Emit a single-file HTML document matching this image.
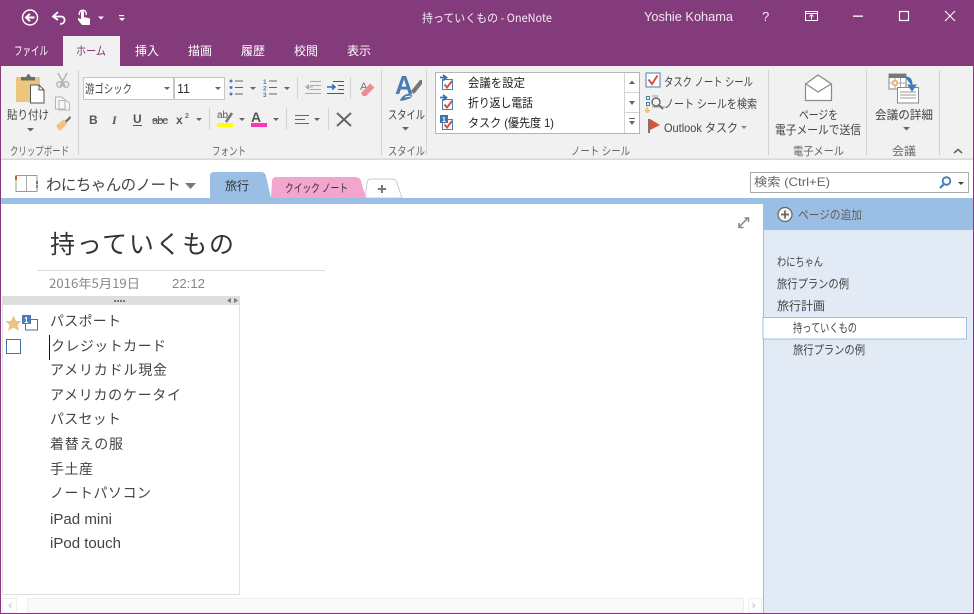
<!DOCTYPE html>
<html lang="ja"><head><meta charset="utf-8"><title>持っていくもの - OneNote</title>
<style>
html,body{margin:0;padding:0;width:974px;height:614px;overflow:hidden;background:#fff}
svg{display:block;position:absolute;left:0;top:0}
text{font-family:"Liberation Sans","Noto Sans CJK JP",sans-serif;white-space:pre}
.j{font-family:"Noto Sans CJK JP","Liberation Sans",sans-serif}
.r{font-size:12px;fill:#444}
.g{font-size:11.5px;fill:#666}
.m{font-size:12px;fill:#fff}
.n{font-size:14px;fill:#444}
.p{font-size:12px;fill:#444}
</style></head><body>
<svg width="974" height="614" viewBox="0 0 974 614">
<rect width="974" height="614" fill="#fff"/>
<rect width="974" height="66" fill="#843b7c"/>
<rect x="63" y="36" width="57" height="30" fill="#f1f1f1"/>
<rect y="66" width="974" height="93" fill="#f1f1f1"/>
<rect y="158.500" width="974" height="1.500" fill="#d8d8d8"/>
<!-- QAT -->
<circle cx="30" cy="17.500" r="7.500" fill="none" stroke="#fff" stroke-width="1.400"/>
<path d="M34.500 17.500H26.500M30 13.800L26 17.500L30 21.200" fill="none" stroke="#fff" stroke-width="2"/>
<path d="M58 12L53 16.500L58 20M54 16.500H61C66 16.500 66 24 60 24" fill="none" stroke="#fff" stroke-width="1.800"/>
<path d="M82 25L78 20V18L81 19V12.500A1.500 1.500 0 0 1 84 12.500V17L90 18.500V25Z" fill="#fff"/><path d="M79.500 15A3.500 3.500 0 1 1 86 15" fill="none" stroke="#fff" stroke-width="1.300"/>
<path d="M98 16.500H104L101 19.500Z" fill="#fff"/>
<rect x="119" y="15" width="5" height="1.200" fill="#fff"/><path d="M119 18H125L122 21Z" fill="#fff"/>
<text x="422" y="22" class="j" style="font-size:11.500px;fill:#f4ecf3" textLength="130" lengthAdjust="spacingAndGlyphs">持っていくもの - OneNote</text>
<text x="644" y="21" style="font-size:12.500px;fill:#f0e6ef" textLength="89" lengthAdjust="spacingAndGlyphs">Yoshie Kohama</text>
<text x="762" y="21" style="font-size:13px;fill:#f0e6ef">?</text>
<rect x="805.500" y="11.500" width="12" height="9" fill="none" stroke="#fff"/><path d="M806 13.500H817M811.500 19.500V15M809.500 16.500L811.500 14.800L813.500 16.500" fill="none" stroke="#fff" stroke-width="1"/>
<rect x="853" y="15.500" width="10" height="1.300" fill="#fff"/>
<rect x="899.500" y="11.500" width="9" height="9" fill="none" stroke="#fff" stroke-width="1.200"/>
<path d="M945 11L955 21M955 11L945 21" stroke="#fff" stroke-width="1.100"/>
<!-- menu -->
<g class="j">
<text x="14" y="55" class="m" textLength="34" lengthAdjust="spacingAndGlyphs">ファイル</text>
<text x="76" y="55" class="m" style="fill:#80397b" textLength="30" lengthAdjust="spacingAndGlyphs">ホーム</text>
<text x="135" y="55" class="m" textLength="24">挿入</text>
<text x="188" y="55" class="m" textLength="24">描画</text>
<text x="241" y="55" class="m" textLength="24">履歴</text>
<text x="294" y="55" class="m" textLength="24">校閲</text>
<text x="347" y="55" class="m" textLength="24">表示</text>
</g>
<!-- separators -->
<g fill="#d2d2d2">
<rect x="78" y="70" width="1" height="85"/><rect x="381" y="70" width="1" height="85"/><rect x="426" y="70" width="1" height="85"/><rect x="768" y="70" width="1" height="85"/><rect x="866" y="70" width="1" height="85"/><rect x="939" y="70" width="1" height="85"/>
<rect x="297" y="77" width="1" height="22"/><rect x="350" y="77" width="1" height="22"/><rect x="209" y="108" width="1" height="22"/><rect x="286" y="108" width="1" height="22"/><rect x="328" y="108" width="1" height="22"/>
</g>
<!-- paste -->
<rect x="16" y="77" width="24" height="25" rx="1" fill="#eec57d"/>
<path d="M21 77H26L28 74H29L31 77H35V80.500H21Z" fill="#6d6d6d"/>
<path d="M30.500 85H39L44 90V103H30.500Z" fill="#fff" stroke="#555"/>
<path d="M39 85V90H44" fill="none" stroke="#555"/>
<path d="M58 73L65 86M67 73L60 86" stroke="#b4b4b4" stroke-width="1.500"/><circle cx="59.500" cy="84.500" r="2.800" fill="none" stroke="#b4b4b4" stroke-width="1.300"/><circle cx="66" cy="84.500" r="2.800" fill="none" stroke="#b4b4b4" stroke-width="1.300"/>
<path d="M55.500 97H62L65 100V109H55.500ZM59 100.500H66L69.500 103V110H59Z" fill="#f7f7f7" stroke="#b4b4b4"/>
<path d="M65 121L70 116L71 118L66 123Z" fill="#666"/><path d="M56 126L64 119L67 124L60 131Z" fill="#eec57d"/>
<g class="j">
<text x="7" y="119" class="r" textLength="42" lengthAdjust="spacingAndGlyphs">貼り付け</text>
<text x="10" y="155" class="g" textLength="59" lengthAdjust="spacingAndGlyphs">クリップボード</text>
<text x="212" y="155" class="g" textLength="34" lengthAdjust="spacingAndGlyphs">フォント</text>
<text x="388" y="155" class="g" textLength="37" lengthAdjust="spacingAndGlyphs">スタイル</text>
<text x="571" y="155" class="g" textLength="59" lengthAdjust="spacingAndGlyphs">ノート シール</text>
<text x="793" y="155" class="g" textLength="51" lengthAdjust="spacingAndGlyphs">電子メール</text>
<text x="892" y="155" class="g" textLength="24" lengthAdjust="spacingAndGlyphs">会議</text>
<text x="388" y="119" class="r" textLength="37" lengthAdjust="spacingAndGlyphs">スタイル</text>
<text x="799" y="119" class="r" textLength="39" lengthAdjust="spacingAndGlyphs">ページを</text>
<text x="775" y="134" class="r" textLength="86" lengthAdjust="spacingAndGlyphs">電子メールで送信</text>
<text x="875" y="119" class="r" textLength="58" lengthAdjust="spacingAndGlyphs">会議の詳細</text>
</g>
<g fill="#666"><path d="M27 128H34L30.500 131.500Z"/><path d="M402 127H409L405.500 130.500Z"/><path d="M903 127H910L906.500 130.500Z"/></g>
<!-- font boxes -->
<rect x="83.500" y="77.500" width="90" height="22" fill="#fff" stroke="#c6c6c6"/>
<rect x="174.500" y="77.500" width="50" height="22" fill="#fff" stroke="#c6c6c6"/>
<text x="85" y="93" class="j r" textLength="47" lengthAdjust="spacingAndGlyphs">游ゴシック</text>
<text x="177" y="93" style="font-size:12.500px;fill:#333">11</text>
<g fill="#666"><path d="M164 87H170L167 90Z"/><path d="M215 87H221L218 90Z"/><path d="M250 87H256L253 90Z"/><path d="M284 87H290L287 90Z"/><path d="M196 118H202L199 121Z"/><path d="M239 118H245L242 121Z"/><path d="M273 118H279L276 121Z"/><path d="M314 118H320L317 121Z"/></g>
<!-- bullets -->
<g fill="#4a7db5"><circle cx="231" cy="81" r="1.500"/><circle cx="231" cy="87.500" r="1.500"/><circle cx="231" cy="94" r="1.500"/></g>
<g fill="#666"><rect x="235" y="80.500" width="8" height="1"/><rect x="235" y="87" width="8" height="1"/><rect x="235" y="93.500" width="8" height="1"/><rect x="269" y="80.500" width="8" height="1"/><rect x="269" y="87" width="8" height="1"/><rect x="269" y="93.500" width="8" height="1"/></g>
<text x="263" y="84" style="font-size:6.500px;fill:#4a7db5;font-weight:bold">1</text><text x="263" y="90.500" style="font-size:6.500px;fill:#4a7db5;font-weight:bold">2</text><text x="263" y="97" style="font-size:6.500px;fill:#4a7db5;font-weight:bold">3</text>
<!-- indent -->
<g fill="#aaa"><rect x="310" y="81" width="11" height="1"/><rect x="310" y="85" width="11" height="1"/><rect x="310" y="89" width="11" height="1"/><rect x="305" y="93" width="16" height="1"/><path d="M305 87L309 84V90Z"/><rect x="308" y="86.500" width="5" height="1"/></g>
<g fill="#555"><rect x="333" y="81" width="11" height="1"/><rect x="338" y="85" width="6" height="1"/><rect x="338" y="89" width="6" height="1"/><rect x="327" y="93" width="17" height="1"/></g><path d="M327 87H334M332 84.500L335 87L332 89.500" fill="none" stroke="#2f6db0" stroke-width="1.500"/>
<!-- eraser -->
<text x="360" y="90" style="font-size:11px;fill:#777">A</text>
<path d="M361 93L370 83.500L374.500 87.500L366 96H363Z" fill="#ea8d95"/>
<!-- format row -->
<text x="89" y="124" style="font-size:12px;font-weight:bold;fill:#555">B</text>
<text x="112" y="124" style="font-size:12px;font-style:italic;fill:#555;font-family:'Liberation Serif',serif;font-weight:bold">I</text>
<text x="133" y="123" style="font-size:12px;font-weight:bold;fill:#555">U</text><rect x="133" y="125" width="9" height="1" fill="#555"/>
<text x="152" y="124" style="font-size:11px;fill:#555" textLength="16">abc</text><rect x="152" y="119.500" width="16" height="1" fill="#555"/>
<text x="176" y="124" style="font-size:12px;font-weight:bold;fill:#555">x</text><text x="185" y="118" style="font-size:7px;fill:#4a7db5;font-weight:bold">2</text>
<text x="217" y="118" style="font-size:10px;fill:#555">ab</text><path d="M226 122L232 113" stroke="#777" stroke-width="2.500"/><rect x="217" y="123" width="16" height="4" fill="#ffff00"/>
<text x="251" y="122" style="font-size:14px;font-weight:bold;fill:#555">A</text><rect x="251" y="123" width="16" height="4" fill="#ff33bb"/>
<g fill="#666"><rect x="295" y="115" width="14" height="1"/><rect x="295" y="119" width="10" height="1"/><rect x="295" y="123" width="14" height="1"/></g>
<path d="M337 113L351 126M351 113L337 126" stroke="#666" stroke-width="2"/>
<!-- style icon -->
<text x="395" y="94" style="font-size:26px;font-weight:bold;fill:#4a7db5" textLength="18" lengthAdjust="spacingAndGlyphs">A</text>
<path d="M411 91L420 80H422V84L414 94Z" fill="#777"/><path d="M400 101C401 95 409 92 412 95C413 98 407 100 400 101Z" fill="#4a7db5"/><path d="M405 97L411 96" stroke="#fff"/>
<!-- gallery -->
<rect x="435.500" y="72.500" width="204" height="61" fill="#fff" stroke="#b5b5b5"/>
<path d="M624.500 73V133M625 92.500H639M625 112.500H639" stroke="#d4d4d4"/>
<path d="M629 84H635L632 80.500Z" fill="#666"/><path d="M629 101H635L632 105Z" fill="#666"/><rect x="629" y="118" width="6" height="1" fill="#666"/><path d="M629 121H635L632 125Z" fill="#666"/>
<defs><g id="c"><rect x="3.500" y="3.500" width="10" height="10" fill="#fff" stroke="#4a7db5"/><path d="M5.500 8.500L8 11.500L13 5" fill="none" stroke="#d2553c" stroke-width="2"/></g>
<g id="ar"><path d="M0 2.500H5M3 0L6.500 2.500L3 5.500" fill="none" stroke="#3572b0" stroke-width="1.700"/></g></defs>
<use href="#c" x="439" y="76"/><use href="#ar" x="440" y="75"/>
<use href="#c" x="439" y="96"/><use href="#ar" x="440" y="95"/>
<use href="#c" x="439" y="116"/><rect x="440" y="115" width="8" height="8" fill="#3f74ad"/><text x="442" y="122" style="font-size:7px;fill:#fff;font-weight:bold">1</text>
<g class="j">
<text x="468" y="87" style="font-size:12px;fill:#222" textLength="57" lengthAdjust="spacingAndGlyphs">会議を設定</text>
<text x="468" y="107" style="font-size:12px;fill:#222" textLength="65" lengthAdjust="spacingAndGlyphs">折り返し電話</text>
<text x="468" y="127" style="font-size:12px;fill:#222" textLength="86" lengthAdjust="spacingAndGlyphs">タスク (優先度 1)</text>
<text x="664" y="86" class="r" textLength="89" lengthAdjust="spacingAndGlyphs">タスク ノート シール</text>
<text x="664" y="108" class="r" textLength="93" lengthAdjust="spacingAndGlyphs">ノート シールを検索</text>
<text x="664" y="132" class="r" textLength="74" lengthAdjust="spacingAndGlyphs">Outlook タスク</text>
</g>
<rect x="646" y="73" width="14" height="14" fill="#fff" stroke="#4a7db5"/><path d="M648.500 79.500L652 84L657.500 75.500" fill="none" stroke="#d2553c" stroke-width="2"/>
<g fill="none" stroke="#4a7db5"><rect x="646.500" y="96.500" width="3" height="3"/><rect x="646.500" y="102.500" width="3" height="3"/></g><path d="M652 96H658M652 107H665" stroke="#999"/>
<circle cx="656" cy="102" r="4" fill="none" stroke="#666" stroke-width="1.400"/><path d="M659 105L663 109" stroke="#666" stroke-width="1.800"/><path d="M647 106L649 110H651L648 113H646L645 110Z" fill="#eec57d"/>
<rect x="648" y="119" width="2" height="14" fill="#777"/><path d="M650 119L660 125L650 130Z" fill="#d2553c"/>
<path d="M741 126H747L744 129Z" fill="#888"/>
<!-- mail -->
<path d="M805.500 84L818 75L831.500 84V100.500H805.500Z" fill="#fff" stroke="#8a8a8a" stroke-width="1.200"/><path d="M806 84L818 92L831 84" fill="none" stroke="#8a8a8a" stroke-width="1.200"/>
<!-- meeting -->
<rect x="889" y="74" width="17" height="15" fill="#fff" stroke="#888"/><rect x="889" y="74" width="17" height="4" fill="#777"/><path d="M895 78V89M900.500 78V89M889 83H906" stroke="#aaa"/><rect x="893" y="81" width="4" height="4" fill="#fff" stroke="#e88a2e"/>
<rect x="897.500" y="87.500" width="21" height="15.500" fill="#fff" stroke="#888"/><path d="M900 92H916M900 95H916M900 98H916" stroke="#999"/>
<path d="M905 77C911 77 912 80 912 86M908 85L912 91L916 85Z" fill="#3f7cbc" stroke="#3f7cbc"/>
<path d="M954 153L958 149.500L962 153" fill="none" stroke="#666" stroke-width="1.600"/>
<!-- notebook bar -->
<path d="M16 175.500H26L26.500 176.500L27 175.500H37V191.500H16Z" fill="#fff" stroke="#999"/><path d="M26.500 176V191" stroke="#aaa"/><rect x="15" y="176" width="2" height="4" fill="#d2553c"/><rect x="36" y="181" width="2" height="3" fill="#4a7db5"/><rect x="36" y="185" width="2" height="3" fill="#64a060"/>
<text x="46" y="190" class="j" style="font-size:15.500px;fill:#444" textLength="135">わにちゃんのノート</text>
<path d="M185 183H196L190.500 189Z" fill="#777"/>
<!-- tabs -->
<path d="M365 198L367 183Q367.500 179 371 179H392Q396 179 397 183L402 198Z" fill="#fff" stroke="#ccc"/>
<path d="M271 198L272 181Q272.500 177 276 177H355Q360 177 361 181L366 198Z" fill="#f2a5cf"/>
<path d="M210 198V176Q210 172 214 172H261Q265 172 266 176L271 198Z" fill="#9bbfe4"/>
<text x="225" y="190" class="j" style="font-size:12px;fill:#333" textLength="24">旅行</text>
<text x="285" y="192" class="j" style="font-size:11.500px;fill:#333" textLength="63" lengthAdjust="spacingAndGlyphs">クイック ノート</text>
<path d="M378 189H386M382 185V193" stroke="#777" stroke-width="2"/>
<!-- search -->
<rect x="750.500" y="172.500" width="218" height="20" fill="#fff" stroke="#ababab"/>
<text x="754" y="186" style="font-size:12px;fill:#666" textLength="76" lengthAdjust="spacingAndGlyphs">検索 (Ctrl+E)</text>
<circle cx="946.500" cy="181" r="3.800" fill="none" stroke="#3f7cbc" stroke-width="1.800"/><path d="M943.500 184.500L940 188" stroke="#3f7cbc" stroke-width="2"/>
<path d="M958 182H964L961 185Z" fill="#444"/>
<!-- blue bar and panel -->
<rect y="198" width="974" height="6" fill="#9bbfe4"/>
<rect x="763" y="198" width="210" height="32" fill="#9bbfe4"/>
<rect x="763" y="230" width="210" height="384" fill="#e1eaf5"/>
<rect x="763" y="204" width="1" height="410" fill="#9bbfe4"/>
<circle cx="785" cy="214.500" r="7" fill="#f4f4f4" stroke="#666" stroke-width="1.200"/><path d="M781 214.500H789M785 210.500V218.500" stroke="#666" stroke-width="1.700"/>
<text x="798" y="219" class="j" style="font-size:12px;fill:#5e5e5e" textLength="64" lengthAdjust="spacingAndGlyphs">ページの追加</text>
<g class="j">
<text x="777" y="266" class="p" textLength="46" lengthAdjust="spacingAndGlyphs">わにちゃん</text>
<text x="777" y="288" class="p" textLength="72" lengthAdjust="spacingAndGlyphs">旅行プランの例</text>
<text x="777" y="310" class="p" textLength="48">旅行計画</text>
<rect x="763" y="317.500" width="203.500" height="21.500" fill="#fff" stroke="#9bbfe4"/>
<text x="793" y="332" class="p" textLength="64" lengthAdjust="spacingAndGlyphs">持っていくもの</text>
<text x="793" y="354" class="p" textLength="72" lengthAdjust="spacingAndGlyphs">旅行プランの例</text>
</g>
<path d="M739 227L748 218M744.500 218H748.500V222M739 223V227.500H743.500" fill="none" stroke="#888" stroke-width="1.500"/>
<!-- page -->
<text x="50" y="253" class="j" style="font-size:25px;fill:#333" textLength="184">持っていくもの</text>
<rect x="37" y="270" width="288" height="1" fill="#dcdcdc"/>
<text x="49" y="288" class="j" style="font-size:12.500px;fill:#888" textLength="91" lengthAdjust="spacingAndGlyphs">2016年5月19日</text>
<text x="172" y="288" style="font-size:13px;fill:#888" textLength="33" lengthAdjust="spacingAndGlyphs">22:12</text>
<!-- container -->
<rect x="2.500" y="296.500" width="237" height="298" fill="#fff" stroke="#e0e0e0"/>
<rect x="2" y="296" width="238" height="9" fill="#dedede"/>
<g fill="#777"><rect x="114" y="300" width="2" height="2"/><rect x="117" y="300" width="2" height="2"/><rect x="120" y="300" width="2" height="2"/><rect x="123" y="300" width="2" height="2"/><path d="M231 298V303L227 300.500Z"/><path d="M234 298V303L238 300.500Z"/></g>
<path d="M13.500 315.500L16 321H21.500L17.500 325L19 331L13.500 327.500L8 331L9.500 325L5.500 321H11Z" fill="#eec27f"/>
<rect x="25.500" y="319.500" width="12" height="10.500" fill="#fff" stroke="#3f74ad"/>
<rect x="22" y="315" width="9" height="9" fill="#4a7db5"/><text x="24" y="323" style="font-size:8px;font-weight:bold;fill:#fff">1</text>
<rect x="6.500" y="339.500" width="14" height="14" fill="#fff" stroke="#3f74ad"/>
<rect x="49" y="335" width="1" height="25" fill="#111"/>
<g class="j">
<text x="50" y="326" class="n" textLength="71">パスポート</text>
<text x="51" y="351" class="n" textLength="115">クレジットカード</text>
<text x="50" y="375" class="n" textLength="117">アメリカドル現金</text>
<text x="50" y="400" class="n" textLength="131">アメリカのケータイ</text>
<text x="50" y="424" class="n" textLength="71">パスセット</text>
<text x="50" y="449" class="n" textLength="73">着替えの服</text>
<text x="50" y="474" class="n" textLength="43">手土産</text>
<text x="50" y="498" class="n" textLength="101">ノートパソコン</text>
</g>
<text x="50" y="524" style="font-size:14.500px;fill:#444" textLength="62" lengthAdjust="spacingAndGlyphs">iPad mini</text>
<text x="50" y="548" style="font-size:14.500px;fill:#444" textLength="71" lengthAdjust="spacingAndGlyphs">iPod touch</text>
<!-- scrollbar -->
<rect x="2.500" y="598.500" width="14" height="14" fill="#fff" stroke="#eee"/>
<rect x="27.500" y="598.500" width="716" height="14" fill="#fafafa" stroke="#eee"/>
<rect x="748.500" y="598.500" width="13" height="14" fill="#fff" stroke="#eee"/>
<path d="M11.500 602V609L8 605.500Z" fill="#ddd"/><path d="M752.500 602V609L756 605.500Z" fill="#ddd"/>
<!-- window border -->
<rect x="0" y="66" width="1" height="548" fill="#843b7c"/><rect x="973" y="66" width="1" height="548" fill="#843b7c"/><rect y="613" width="974" height="1" fill="#843b7c"/>
</svg>
</body></html>
